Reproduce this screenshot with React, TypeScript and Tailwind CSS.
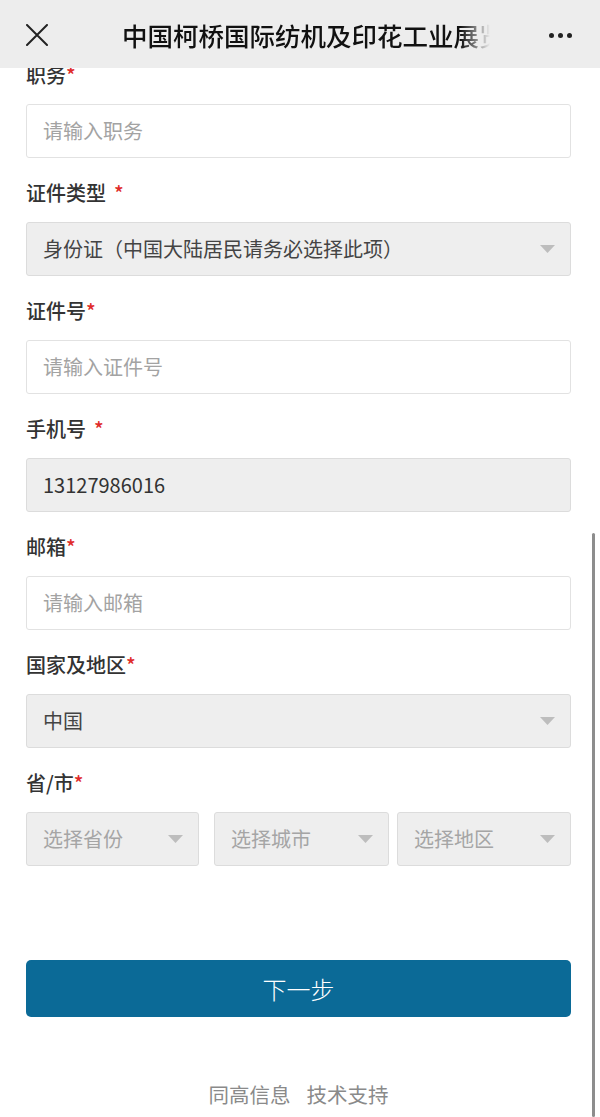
import { ChevronDown } from 'lucide-react';

const font = { fontFamily: '"Noto Sans CJK SC", "Noto Sans", sans-serif' };

function Label({ text, spaced }: { text: string; spaced?: boolean }) {
    return (
        <div className="h-[28px] mb-[15px] flex items-center text-[20px] leading-[28px] font-medium text-[#333]">
            {text}
            {spaced && <span className="w-[8px]" />}
            <span className="text-[#e02b2b]">*</span>
        </div>
    );
}

function Arrow() {
    return (
        <svg width="15" height="8" viewBox="0 0 15 8" className="shrink-0">
            <path d="M0 0 L15 0 L7.5 8 Z" fill="#bdbdbd" />
        </svg>
    );
}

function Input({ placeholder }: { placeholder: string }) {
    return (
        <div className="h-[54px] mb-[21px] rounded-[3px] border border-[#e2e2e2] bg-white flex items-center px-[16px] text-[20px] text-[#a3a3a3]">
            {placeholder}
        </div>
    );
}

function Select({ value, muted, className = '' }: { value: string; muted?: boolean; className?: string }) {
    return (
        <div className={`h-[54px] rounded-[3px] border border-[#dcdcdc] bg-[#eeeeee] flex items-center justify-between pl-[16px] pr-[15px] text-[20px] ${muted ? 'text-[#a5a5a5]' : 'text-[#444]'} ${className}`}>
            <span className="whitespace-nowrap">{value}</span>
            <Arrow />
        </div>
    );
}

export default function App() {
    void ChevronDown;
    return (
        <div className="relative w-[600px] h-[1117px] overflow-hidden bg-white" style={font}>
            {/* Header */}
            <div className="relative z-10 h-[68px] bg-[#ededed] flex items-center">
                <svg width="22" height="22" viewBox="0 0 22 22" className="ml-[26px] mt-[2px]">
                    <path d="M1 1 L21 21 M21 1 L1 21" stroke="#222" strokeWidth="2" strokeLinecap="round" />
                </svg>
                <div
                    className="ml-[74px] w-[368px] overflow-hidden whitespace-nowrap text-[25.5px] font-medium text-[#111] mt-[2px]"
                    style={{ WebkitMaskImage: 'linear-gradient(to right, black 92%, transparent 100%)' }}
                >
                    中国柯桥国际纺机及印花工业展览会
                </div>
                <div className="ml-auto mr-[28px] mt-[2px] flex gap-[4px]">
                    <span className="w-[5px] h-[5px] rounded-full bg-[#222]" />
                    <span className="w-[5px] h-[5px] rounded-full bg-[#222]" />
                    <span className="w-[5px] h-[5px] rounded-full bg-[#222]" />
                </div>
            </div>

            {/* 表单 */}
            <div className="-mt-[7px] pl-[26px] pr-[29px]">
                <Label text="职务" />
                <Input placeholder="请输入职务" />

                <Label text="证件类型" spaced />
                <Select value="身份证（中国大陆居民请务必选择此项）" className="mb-[21px]" />

                <Label text="证件号" />
                <Input placeholder="请输入证件号" />

                <Label text="手机号" spaced />
                <div className="h-[54px] mb-[21px] rounded-[3px] border border-[#dcdcdc] bg-[#eeeeee] flex items-center px-[16px] text-[20px] text-[#333]">
                    13127986016
                </div>

                <Label text="邮箱" />
                <Input placeholder="请输入邮箱" />

                <Label text="国家及地区" />
                <Select value="中国" className="mb-[21px]" />

                <Label text="省/市" />
                <div className="flex">
                    <Select value="选择省份" muted className="w-[173px] shrink-0" />
                    <Select value="选择城市" muted className="w-[175px] shrink-0 ml-[15px]" />
                    <Select value="选择地区" muted className="flex-1 ml-[8px]" />
                </div>

                <button className="mt-[94px] w-full h-[57px] rounded-[5px] bg-[#0b6a97] text-white text-[24px] font-light">
                    下一步
                </button>

                <div className="mt-[62px] flex justify-center gap-[16px] text-[20.5px] text-[#8a8a8a]">
                    <span>同高信息</span>
                    <span>技术支持</span>
                </div>
            </div>

            {/* 滚动条 */}
            <div className="absolute right-[5px] top-[533px] bottom-0 w-[3px] rounded-full bg-[#8d8d8d]" />
        </div>
    );
}
